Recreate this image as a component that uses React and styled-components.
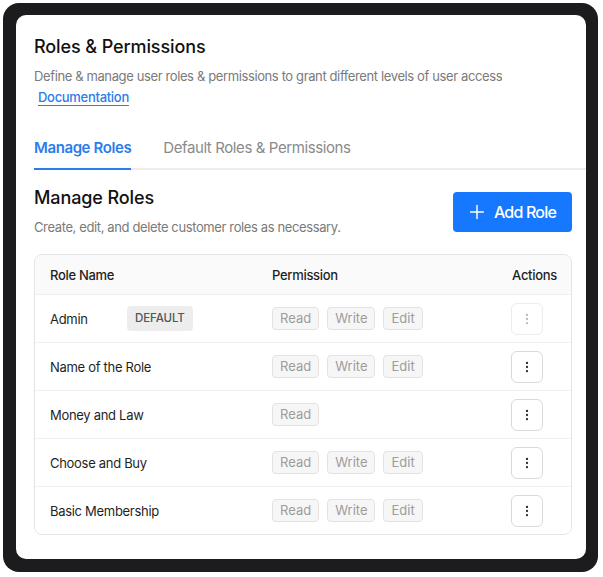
import React from 'react';
import styled, {createGlobalStyle} from "styled-components";
import {Plus, EllipsisVertical} from "lucide-react";

const roles = [
    {name: 'Admin', isDefault: true, perms: ['Read', 'Write', 'Edit'], locked: true},
    {name: 'Name of the Role', perms: ['Read', 'Write', 'Edit']},
    {name: 'Money and Law', perms: ['Read']},
    {name: 'Choose and Buy', perms: ['Read', 'Write', 'Edit']},
    {name: 'Basic Membership', perms: ['Read', 'Write', 'Edit']},
];

function App() {
    return (
        <>
            <GlobalStyle/>
            <Frame>
                <Card>
                    <Title>Roles &amp; Permissions</Title>
                    <Description>Define &amp; manage user roles &amp; permissions to grant different levels of user access</Description>
                    <DocLink href="#">Documentation</DocLink>

                    <Tabs>
                        <Tab active>Manage Roles</Tab>
                        <Tab>Default Roles &amp; Permissions</Tab>
                    </Tabs>

                    <SectionHead>
                        <div>
                            <Title>Manage Roles</Title>
                            <Description>Create, edit, and delete customer roles as necessary.</Description>
                        </div>
                        <AddButton>
                            <Plus size={22} strokeWidth={1.6}/>
                            Add Role
                        </AddButton>
                    </SectionHead>

                    <Table>
                        <HeaderRow>
                            <div>Role Name</div>
                            <div>Permission</div>
                            <div>Actions</div>
                        </HeaderRow>
                        {roles.map((role) => (
                            <Row key={role.name}>
                                <NameCell>
                                    <NameText>{role.name}</NameText>
                                    {role.isDefault && <Badge>DEFAULT</Badge>}
                                </NameCell>
                                <Chips>
                                    {role.perms.map((p) => <Chip key={p}>{p}</Chip>)}
                                </Chips>
                                <ActionButton disabled={role.locked}>
                                    <EllipsisVertical size={14} strokeWidth={2}/>
                                </ActionButton>
                            </Row>
                        ))}
                    </Table>
                </Card>
            </Frame>
        </>
    );
}

const GlobalStyle = createGlobalStyle`
body {
  margin: 0;
  background: #ffffff;
  font-family: Inter, "Noto Sans", sans-serif;
  -webkit-font-smoothing: antialiased;
}
`;

const Frame = styled.div`
margin: 3px;
width: 595px;
height: 569px;
box-sizing: border-box;
background: #1c1c1e;
border-radius: 16px;
padding: 12px 12px 13px 13px;
`;
const Card = styled.div`
height: 100%;
box-sizing: border-box;
background: #fff;
border-radius: 10px;
padding: 20px 14px 0 18px;
display: flex;
flex-direction: column;
`;
const Title = styled.div`
font-size: 18px;
line-height: 24px;
font-weight: 500;
color: #111;
letter-spacing: -0.1px;
`;
const Description = styled.div`
margin-top: 7px;
font-size: 13px;
line-height: 20px;
color: #7a7a7a;
letter-spacing: -0.38px;
`;
const DocLink = styled.a`
align-self: flex-start;
margin-left: 4px;
margin-top: 1px;
font-size: 13px;
line-height: 20px;
font-weight: 500;
color: #2b7de9;
letter-spacing: -0.3px;
text-decoration: underline;
text-underline-offset: 3px;
`;
const Tabs = styled.div`
margin-top: 31px;
margin-right: -14px;
display: flex;
gap: 32px;
border-bottom: 2px solid #ededed;
`;
const Tab = styled.div`
padding-bottom: 10px;
margin-bottom: -2px;
font-size: 15px;
line-height: 20px;
letter-spacing: -0.4px;
font-weight: ${p => p.active ? 600 : 400};
color: ${p => p.active ? '#2b7de9' : '#8a8a8a'};
border-bottom: 2px solid ${p => p.active ? '#2b7de9' : 'transparent'};
`;
const SectionHead = styled.div`
margin-top: 16px;
display: flex;
justify-content: space-between;
align-items: flex-start;
`;
const AddButton = styled.button`
margin-top: 6px;
height: 40px;
display: flex;
align-items: center;
gap: 6px;
padding: 0 16px 0 13px;
border: none;
border-radius: 4px;
background: #1677ff;
color: #fff;
font-family: inherit;
font-size: 16px;
font-weight: 500;
letter-spacing: -0.8px;
cursor: pointer;
`;
const Table = styled.div`
margin-top: 17px;
border: 1px solid #e4e4e4;
border-radius: 8px;
overflow: hidden;
`;
const HeaderRow = styled.div`
display: grid;
grid-template-columns: 222px 1fr auto;
align-items: center;
height: 39px;
padding: 0 14px 0 15px;
background: #fafafa;
font-size: 13px;
font-weight: 500;
letter-spacing: -0.3px;
color: #1f1f1f;
border-bottom: 1px solid #f0f0f0;
`;
const Row = styled(HeaderRow)`
height: 47px;
background: #fff;
font-weight: 400;
&:last-child {
  border-bottom: none;
}
`;
const NameCell = styled.div`
display: flex;
align-items: center;
`;
const NameText = styled.span`
min-width: 77px;
`;
const Badge = styled.span`
padding: 0 8px;
height: 25px;
line-height: 25px;
border-radius: 4px;
background: #ededed;
font-size: 11.5px;
font-weight: 500;
letter-spacing: -0.1px;
color: #555;
`;
const Chips = styled.div`
display: flex;
gap: 8px;
`;
const Chip = styled.span`
height: 21px;
line-height: 21px;
padding: 0 7px;
border: 1px solid #e2e2e2;
border-radius: 4px;
background: #f6f6f6;
font-size: 13px;
letter-spacing: 0;
color: #9c9c9c;
`;
const ActionButton = styled.button`
width: 32px;
height: 32px;
margin-right: 14px;
padding: 0;
display: flex;
align-items: center;
justify-content: center;
border: 1px solid ${p => p.disabled ? '#ececec' : '#d9d9d9'};
border-radius: 6px;
background: #fff;
color: ${p => p.disabled ? '#bdbdbd' : '#333'};
`;

export default App;
